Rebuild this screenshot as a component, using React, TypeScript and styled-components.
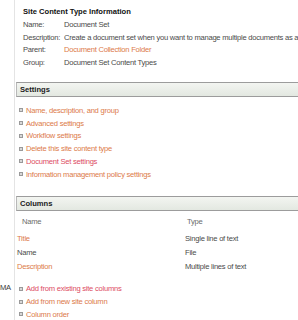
import { FC } from "react";
import styled, { createGlobalStyle } from "styled-components";

const GlobalStyle = createGlobalStyle`
  html, body {
    margin: 0;
    padding: 0;
    background: #ffffff;
  }
  body {
    font-family: "Liberation Sans", Arial, sans-serif;
    font-size: 7.6px;
    letter-spacing: -0.25px;
    color: #4a4a4a;
    overflow: hidden;
  }
`;

type Tone = "link" | "visited" | "plain";

const toneColor = (tone: Tone) =>
  tone === "link" ? "#dc7a4a" : tone === "visited" ? "#dd4c63" : "#4a4a4a";

const Page = styled.div`
  width: 283px;
  height: 320px;
  margin-left: 14px;
  border-left: 1px solid #e4e4e4;
  white-space: nowrap;
`;

const Info = styled.section`
  padding: 6px 0 0 8px;
`;

const InfoTitle = styled.div`
  font-weight: bold;
  letter-spacing: 0;
  color: #111;
  line-height: 12px;
  margin-bottom: 1px;
`;

const InfoRow = styled.div`
  display: grid;
  grid-template-columns: 41px 1fr;
  line-height: 12.7px;
`;

const InfoValue = styled.span<{ $tone: Tone }>`
  overflow: hidden;
  color: ${({ $tone }) => toneColor($tone)};
`;

const SectionBar = styled.div<{ $top: number }>`
  margin: ${({ $top }) => $top}px 0 0 1px;
  height: 13px;
  line-height: 13px;
  border-top: 1px solid #9c9c9c;
  border-bottom: 1px solid #9c9c9c;
  border-left: 1px solid #b8b8b8;
  background: linear-gradient(#f3f5f1, #e3e8e1);
  padding-left: 3px;
  font-weight: bold;
  letter-spacing: 0;
  color: #1a1a1a;
`;

const LinkList = styled.ul<{ $top: number }>`
  list-style: none;
  margin: ${({ $top }) => $top}px 0 0 0;
  padding: 0 0 0 4px;
`;

const LinkItem = styled.li<{ $tone: Tone }>`
  display: flex;
  align-items: center;
  gap: 3px;
  height: 12.8px;
  color: ${({ $tone }) => toneColor($tone)};
`;

const Bullet = styled.span`
  width: 2px;
  height: 2px;
  border: 1px solid #9a9a9a;
  background: #d8d8d8;
  flex: none;
`;

const ColumnTable = styled.div`
  margin-top: 4px;
`;

const ColumnRow = styled.div<{ $head?: boolean }>`
  display: grid;
  grid-template-columns: ${({ $head }) => ($head ? "165px 1fr" : "168px 1fr")};
  padding-left: ${({ $head }) => ($head ? "7px" : "2px")};
  height: ${({ $head }) => ($head ? "17px" : "14.3px")};
  line-height: 14.3px;
  color: ${({ $head }) => ($head ? "#6a6a6a" : "#4a4a4a")};
`;

const ColumnName = styled.span<{ $tone: Tone }>`
  color: ${({ $tone }) => toneColor($tone)};
`;

const Footer = styled.div`
  display: flex;
  margin-top: 8px;
`;

const MarginLabel = styled.span`
  width: 15px;
  margin-left: -15px;
  line-height: 12.8px;
  color: #3a3a3a;
`;

type Link = { label: string; tone: Tone };

const settings: Link[] = [
  { label: "Name, description, and group", tone: "link" },
  { label: "Advanced settings", tone: "link" },
  { label: "Workflow settings", tone: "link" },
  { label: "Delete this site content type", tone: "link" },
  { label: "Document Set settings", tone: "visited" },
  { label: "Information management policy settings", tone: "link" },
];

const columnLinks: Link[] = [
  { label: "Add from existing site columns", tone: "visited" },
  { label: "Add from new site column", tone: "link" },
  { label: "Column order", tone: "link" },
];

const info: { label: string; value: string; tone: Tone }[] = [
  { label: "Name:", value: "Document Set", tone: "plain" },
  {
    label: "Description:",
    value:
      "Create a document set when you want to manage multiple documents as a single work product.",
    tone: "plain",
  },
  { label: "Parent:", value: "Document Collection Folder", tone: "link" },
  { label: "Group:", value: "Document Set Content Types", tone: "plain" },
];

const columns: { name: string; type: string; tone: Tone }[] = [
  { name: "Title", type: "Single line of text", tone: "link" },
  { name: "Name", type: "File", tone: "plain" },
  { name: "Description", type: "Multiple lines of text", tone: "link" },
];

const LinkGroup: FC<{ items: Link[]; top: number }> = ({ items, top }) => (
  <LinkList $top={top}>
    {items.map((item) => (
      <LinkItem key={item.label} $tone={item.tone}>
        <Bullet />
        {item.label}
      </LinkItem>
    ))}
  </LinkList>
);

export default function App() {
  return (
    <>
      <GlobalStyle />
      <Page>
        <Info>
          <InfoTitle>Site Content Type Information</InfoTitle>
          {info.map((row) => (
            <InfoRow key={row.label}>
              <span>{row.label}</span>
              <InfoValue $tone={row.tone}>{row.value}</InfoValue>
            </InfoRow>
          ))}
        </Info>
        <SectionBar $top={12}>Settings</SectionBar>
        <LinkGroup items={settings} top={7} />
        <SectionBar $top={15}>Columns</SectionBar>
        <ColumnTable>
          <ColumnRow $head>
            <span>Name</span>
            <span>Type</span>
          </ColumnRow>
          {columns.map((col) => (
            <ColumnRow key={col.name}>
              <ColumnName $tone={col.tone}>{col.name}</ColumnName>
              <span>{col.type}</span>
            </ColumnRow>
          ))}
        </ColumnTable>
        <Footer>
          <MarginLabel>MA</MarginLabel>
          <LinkGroup items={columnLinks} top={0} />
        </Footer>
      </Page>
    </>
  );
}
